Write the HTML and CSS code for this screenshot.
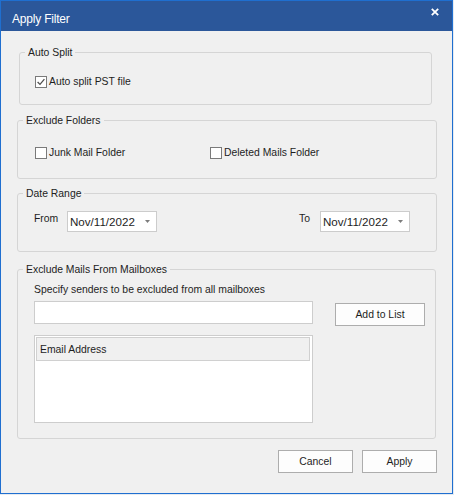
FILE: index.html
```html
<!DOCTYPE html>
<html>
<head>
<meta charset="utf-8">
<title>Apply Filter</title>
<link rel="stylesheet" href="styles.css">
</head>
<body>
<div class="window">
  <div class="titlebar">
    <span class="title">Apply Filter</span>
    <svg class="close" width="8" height="8" viewBox="0 0 8 8"><path d="M0.8 0.8 L7.2 7.2 M7.2 0.8 L0.8 7.2" stroke="#ffffff" stroke-width="1.8" fill="none"/></svg>
  </div>
  <div class="content">
    <fieldset class="group g-split">
      <legend>Auto Split</legend>
      <div class="gbody">
        <label class="check"><span class="box"><svg width="10" height="10" viewBox="0 0 10 10"><path d="M1.6 5 L4 7.4 L8.4 2.2" stroke="#505050" stroke-width="1.3" fill="none"/></svg></span>Auto split PST file</label>
      </div>
    </fieldset>

    <fieldset class="group g-folders">
      <legend>Exclude Folders</legend>
      <div class="gbody check-row">
        <label class="check junk"><span class="box"></span>Junk Mail Folder</label>
        <label class="check"><span class="box"></span>Deleted Mails Folder</label>
      </div>
    </fieldset>

    <fieldset class="group g-date">
      <legend>Date Range</legend>
      <div class="gbody date-row">
        <span class="date-label from">From</span>
        <div class="date-box"><span class="date-text">Nov/11/2022</span><svg class="arrow" width="5" height="3" viewBox="0 0 5 3"><polygon points="0,0 5,0 2.5,3" fill="#7c7c7c"/></svg></div>
        <span class="date-label to">To</span>
        <div class="date-box"><span class="date-text">Nov/11/2022</span><svg class="arrow" width="5" height="3" viewBox="0 0 5 3"><polygon points="0,0 5,0 2.5,3" fill="#7c7c7c"/></svg></div>
      </div>
    </fieldset>

    <fieldset class="group g-mail">
      <legend>Exclude Mails From Mailboxes</legend>
      <div class="gbody">
        <div class="hint">Specify senders to be excluded from all mailboxes</div>
        <div class="entry-row">
          <div class="text-input"></div>
          <button class="btn add">Add to List</button>
        </div>
        <div class="list">
          <div class="list-head">Email Address</div>
        </div>
      </div>
    </fieldset>

    <div class="actions">
      <button class="btn">Cancel</button>
      <button class="btn">Apply</button>
    </div>
  </div>
</div>
</body>
</html>
```

FILE: styles.css
```css
* { box-sizing: border-box; }

body {
  margin: 0;
  background: #e6ebf1;
  font-family: "Liberation Sans", Arial, sans-serif;
  font-size: 10.4px;
  color: #1e1e1e;
}

.window {
  width: 453px;
  height: 494px;
  border: 1px solid #1f6fd0;
  background: #f0f0f0;
  display: flex;
  flex-direction: column;
}

.titlebar {
  flex: none;
  height: 30px;
  background: #2b579a;
  display: flex;
  align-items: flex-start;
  justify-content: space-between;
  padding: 0 13px 0 11px;
}

.title {
  margin-top: 11px;
  font-size: 12px;
  line-height: 14px;
  letter-spacing: -0.2px;
  color: #ffffff;
}

.close {
  margin-top: 7px;
  display: block;
}

.content {
  display: flex;
  flex-direction: column;
  align-items: flex-start;
  padding-top: 15px;
}

.group {
  margin: 0;
  border: 1px solid #d5d5d5;
  border-radius: 3px;
  min-width: 0;
  padding-left: 0;
  padding-right: 0;
}

.group legend {
  margin-left: 5px;
  padding: 0 3px;
  height: 13px;
  line-height: 13px;
  font-size: 10.4px;
  color: #222;
}

.g-split { margin-left: 18px; width: 413px; padding-top: 17px; padding-bottom: 16px; }
.g-split .gbody { padding-left: 15px; }

.g-folders { margin: 9px 0 0 16px; width: 420px; padding-top: 20px; padding-bottom: 19px; }
.g-folders .gbody { padding-left: 17px; }

.g-date { margin: 8px 0 0 16px; width: 420px; padding-top: 11px; padding-bottom: 19px; }
.g-date .gbody { padding-left: 16px; }

.g-mail { margin: 11px 0 0 16px; width: 419px; padding-top: 7px; padding-bottom: 15px; }
.g-mail .gbody { padding-left: 16px; }

.check {
  display: flex;
  align-items: center;
  height: 12px;
  line-height: 12px;
  white-space: nowrap;
}

.box {
  width: 12px;
  height: 12px;
  margin-right: 2px;
  border: 1px solid #7a7a7a;
  background: #ffffff;
  display: flex;
  align-items: center;
  justify-content: center;
  flex: none;
}

.box svg { display: block; }

.check-row { display: flex; }
.junk { width: 175px; }

.date-row {
  display: flex;
  align-items: flex-start;
}

.date-label {
  margin-top: 1px;
  line-height: 13px;
}
.from { width: 33px; }
.to { width: 21px; margin-left: 142px; }

.date-box {
  width: 90px;
  height: 21px;
  border: 1px solid #cccccc;
  background: #ffffff;
  display: flex;
  align-items: flex-start;
  justify-content: space-between;
  padding: 3px 6px 0 2px;
}

.date-text {
  font-size: 11.6px;
  line-height: 14px;
}

.arrow {
  display: block;
  margin-top: 5px;
}

.hint { line-height: 13px; }

.entry-row {
  display: flex;
  align-items: flex-start;
  margin-top: 5px;
}

.text-input {
  width: 279px;
  height: 23px;
  border: 1px solid #cdcdcd;
  background: #ffffff;
}

.btn {
  width: 75px;
  height: 23px;
  border: 1px solid #adadad;
  background: #fdfdfd;
  font-family: "Liberation Sans", Arial, sans-serif;
  font-size: 10.4px;
  color: #1e1e1e;
  padding: 0;
  margin: 0;
}

.add {
  width: 90px;
  margin-left: 22px;
  margin-top: 2px;
}

.list {
  margin-top: 9px;
  width: 279px;
  height: 88px;
  border: 1px solid #cdcdcd;
  background: #ffffff;
  padding: 1px 2px 0 1px;
}

.list-head {
  height: 24px;
  border: 1px solid #d0d0d0;
  background: #f0f0f0;
  padding: 5px 0 0 3px;
  line-height: 13px;
}

.actions {
  align-self: stretch;
  display: flex;
  justify-content: flex-end;
  gap: 9px;
  margin-top: 11px;
  padding-right: 15px;
}
```
